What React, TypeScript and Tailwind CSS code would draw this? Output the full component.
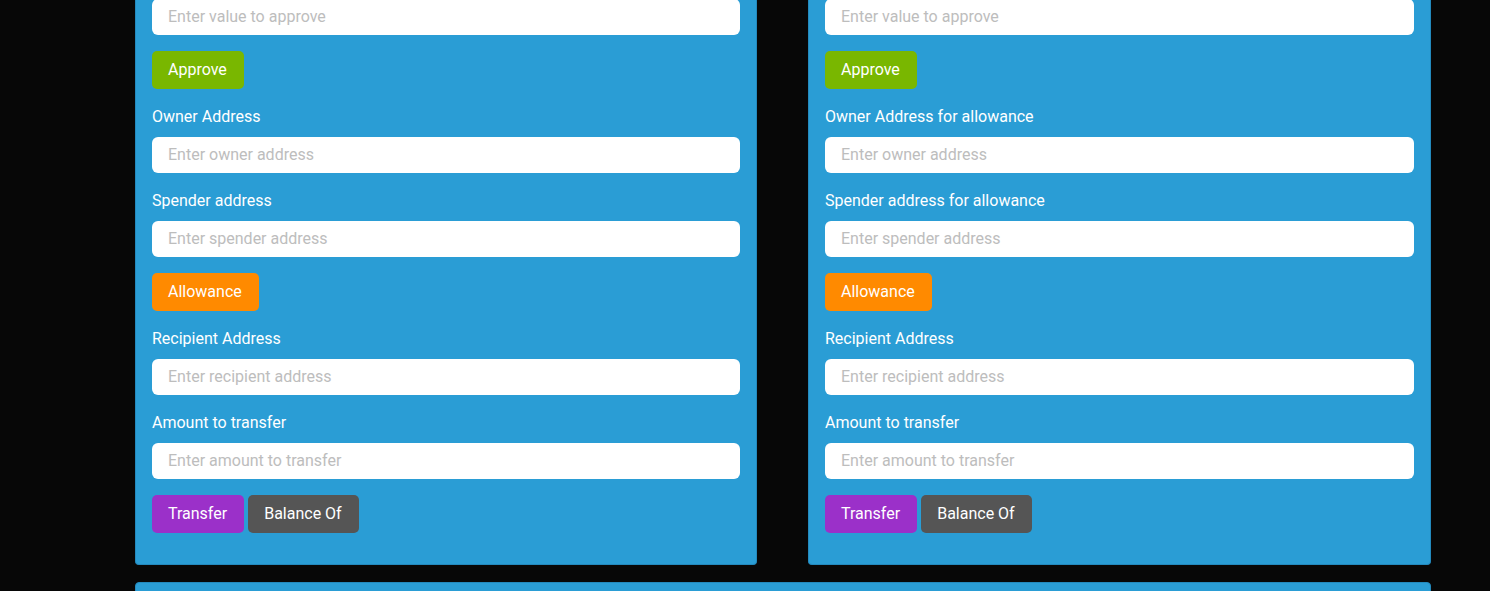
import React from 'react';

type Field = { label: string; placeholder: string };

const ownerFields = (suffix: string): Field[] => [
  { label: `Owner Address${suffix}`, placeholder: 'Enter owner address' },
  { label: `Spender address${suffix}`, placeholder: 'Enter spender address' },
];

const transferFields: Field[] = [
  { label: 'Recipient Address', placeholder: 'Enter recipient address' },
  { label: 'Amount to transfer', placeholder: 'Enter amount to transfer' },
];

function Input({ placeholder }: { placeholder: string }) {
  return (
    <input
      type="text"
      placeholder={placeholder}
      className="block w-full h-9 rounded-md bg-white px-4 pb-[2px] text-base text-gray-800 placeholder:text-[#bdbdbd] outline-none"
    />
  );
}

function LabeledInput({ label, placeholder }: Field) {
  return (
    <div>
      <label className="block mt-4 mb-2 text-base leading-6 text-white">{label}</label>
      <Input placeholder={placeholder} />
    </div>
  );
}

function Btn({ children, color }: { children: React.ReactNode; color: string }) {
  return (
    <button className={`h-[38px] pl-4 pr-[17px] rounded-[5px] text-base leading-6 text-white ${color}`}>
      {children}
    </button>
  );
}

function TokenCard({ suffix }: { suffix: string }) {
  return (
    <div className="bg-[#2a9dd5] border border-t-0 border-[#2389bd] rounded-b px-4 pb-[31px] -mt-px">
      <Input placeholder="Enter value to approve" />
      <div className="mt-4">
        <Btn color="bg-[#79b700]">Approve</Btn>
      </div>

      {ownerFields(suffix).map(f => (
        <LabeledInput key={f.label} {...f} />
      ))}
      <div className="mt-4">
        <Btn color="bg-[#ff8a00]">Allowance</Btn>
      </div>

      {transferFields.map(f => (
        <LabeledInput key={f.label} {...f} />
      ))}
      <div className="mt-4 flex gap-1">
        <Btn color="bg-[#9b30c9]">Transfer</Btn>
        <Btn color="bg-[#555555]">Balance Of</Btn>
      </div>
    </div>
  );
}

export default function App() {
  return (
    <div
      className="h-[591px] overflow-hidden bg-[#070707] pl-[135px] pr-[59px]"
      style={{ fontFamily: 'Roboto, "Noto Sans", sans-serif' }}
    >
      <div className="grid grid-cols-[622px_623px] gap-x-[51px]">
        <TokenCard suffix="" />
        <TokenCard suffix=" for allowance" />
      </div>
      <div className="mt-[17px] h-20 bg-[#2a9dd5] border border-[#2389bd] rounded" />
    </div>
  );
}
